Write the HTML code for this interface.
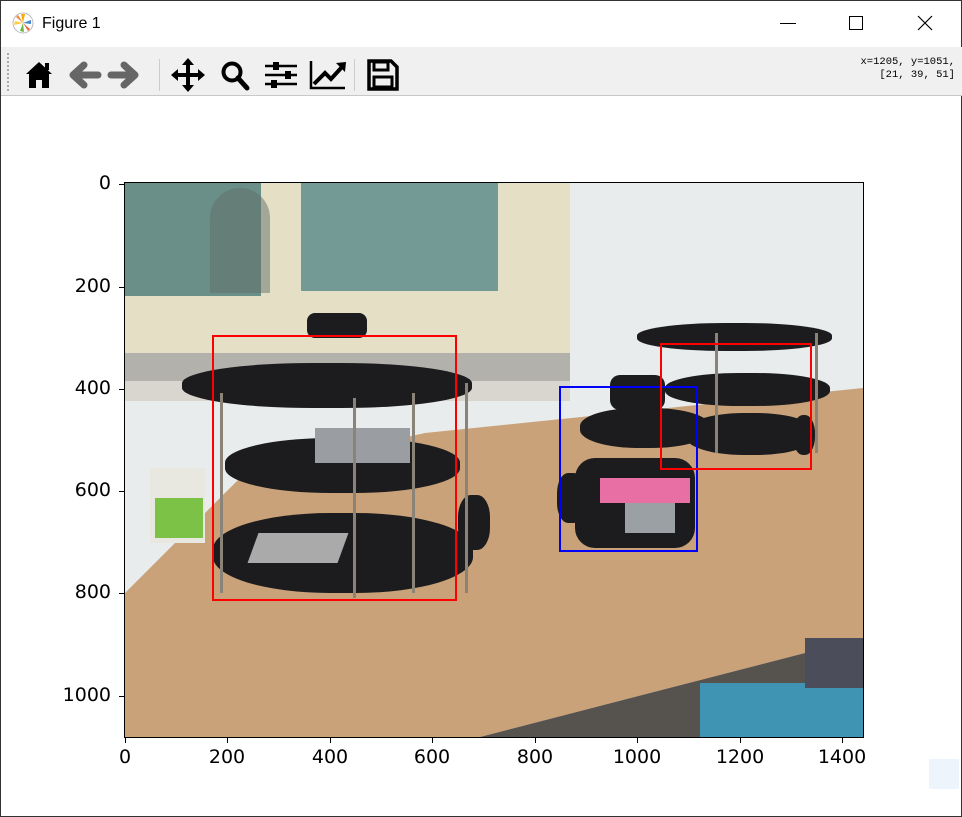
<!DOCTYPE html>
<html><head><meta charset="utf-8"><style>
*{margin:0;padding:0;box-sizing:border-box}
body{width:962px;height:817px;background:#fff;position:relative;overflow:hidden;font-family:"DejaVu Sans","Liberation Sans",sans-serif;border:1px solid #333}
.a{position:absolute}
.tb{left:0;top:46px;width:962px;height:49px;background:#f0f0f0;border-bottom:1px solid #c8c8c8}
.yl{position:absolute;right:850px;font-size:19px;color:#000;text-align:right}
.xl{position:absolute;top:745px;font-size:19px;color:#000;transform:translateX(-50%)}
.tk{position:absolute;background:#000}
.box{position:absolute;border:2px solid}
.plate{position:absolute;background:#1c1c1e;border-radius:45%}
.rod{position:absolute;width:3px;background:#8a8478}
</style></head><body>
<svg class="a" style="left:11px;top:11px" width="22" height="22" viewBox="0 0 22 22"><circle cx="11" cy="11" r="10" fill="#fff" stroke="#bbb"/><path d="M11 11L4 5L6 3Z" fill="#e84"/><path d="M11 11L9 2L13 2Z" fill="#fa0"/><path d="M11 11L2 13L3 9Z" fill="#fc4"/><path d="M11 11L18 17L16 19Z" fill="#e64"/><path d="M11 11L8 19L12 20Z" fill="#6b4"/><path d="M11 11L19 8L19 12Z" fill="#48c"/></svg>
<div class="a" style="left:41px;top:14px;font-family:'Liberation Sans',sans-serif;font-size:16px">Figure 1</div>
<div class="a" style="left:779px;top:22px;width:16px;height:1px;background:#000"></div>
<div class="a" style="left:848px;top:15px;width:14px;height:14px;border:1px solid #000"></div>
<svg class="a" style="left:916px;top:14px" width="16" height="16"><path d="M1 1L15 15M15 1L1 15" stroke="#000" stroke-width="1.2"/></svg>
<div class="a tb"></div>
<div class="a" style="left:6px;top:52px;width:2px;height:38px;border-left:2px dotted #aaa"></div>
<svg class="a" style="left:22px;top:56px" width="380" height="36" viewBox="0 0 380 36">
<path d="M3 17L16 5L29 17L26 17L26 31L19 31L19 23L13 23L13 31L6 31L6 17Z" fill="#000"/><rect x="22" y="6" width="4" height="7" fill="#000"/>
<path d="M61 8L50 18L61 28M50 18L75 18" stroke="#666" stroke-width="7" fill="none" stroke-linejoin="round" stroke-linecap="round"/>
<path d="M101 8L112 18L101 28M112 18L88 18" stroke="#666" stroke-width="7" fill="none" stroke-linejoin="round" stroke-linecap="round"/>
<rect x="136" y="2" width="1" height="32" fill="#ccc"/>
<path d="M165 4V32M151 18H179" stroke="#000" stroke-width="4"/><path d="M165 1L159 8H171ZM165 35L159 28H171ZM148 18L155 12V24ZM182 18L175 12V24Z" fill="#000"/>
<circle cx="209" cy="15" r="8.5" stroke="#000" stroke-width="4" fill="none"/><path d="M215 21L224 31" stroke="#000" stroke-width="5" stroke-linecap="round"/>
<path d="M242 9H274M242 18H274M242 27H274" stroke="#000" stroke-width="2.5"/><rect x="250" y="5" width="6" height="8" fill="#000"/><rect x="262" y="14" width="6" height="8" fill="#000"/><rect x="248" y="23" width="6" height="8" fill="#000"/>
<path d="M288 4V31H322" stroke="#000" stroke-width="2.5" fill="none"/><path d="M291 27L302 16L308 22L319 10" stroke="#000" stroke-width="4" fill="none"/><path d="M313 6L323 5L322 15Z" fill="#000"/>
<rect x="331" y="2" width="1" height="32" fill="#ccc"/>
<path d="M346 4H368L374 10V32H346Z" fill="none" stroke="#000" stroke-width="3.5"/><rect x="351" y="5" width="14" height="8" fill="none" stroke="#000" stroke-width="3"/><rect x="351" y="20" width="18" height="10" fill="none" stroke="#000" stroke-width="3"/>
</svg>
<div class="a" style="right:6px;top:55px;font-family:'Liberation Mono',monospace;font-size:10.5px;line-height:13px;text-align:right">x=1205, y=1051,<br>[21, 39, 51]</div>
<div class="a" style="left:124px;top:182px;width:738px;height:554px;overflow:hidden;background:#e9ecec">
 <div class="a" style="left:0;top:0;width:445px;height:190px;background:#e5dfc6"></div>
 <div class="a" style="left:0;top:0;width:136px;height:113px;background:#6a8e88"></div>
 <div class="a" style="left:176px;top:0;width:197px;height:108px;background:#749a95"></div>
 <div class="a" style="left:85px;top:5px;width:60px;height:105px;background:#5f6f68;border-radius:30px 30px 0 0;opacity:.5"></div>
 <div class="a" style="left:0;top:170px;width:445px;height:28px;background:#b3b1ac"></div>
 <div class="a" style="left:0;top:198px;width:445px;height:20px;background:#d9d6cf"></div>
 <div class="a" style="left:0;top:0;width:738px;height:554px;background:#c9a27a;clip-path:polygon(0 410px,120px 290px,300px 250px,738px 205px,738px 455px,355px 554px,0 554px)"></div>
 <div class="a" style="left:0;top:0;width:738px;height:554px;background:#56524e;clip-path:polygon(355px 554px,738px 455px,738px 554px)"></div>
 <div class="a" style="left:575px;top:500px;width:163px;height:54px;background:#3f93b3"></div>
 <div class="a" style="left:680px;top:455px;width:58px;height:50px;background:#4b4e5a"></div>
 <div class="a" style="left:25px;top:285px;width:55px;height:75px;background:#e8e8e0"></div>
 <div class="a" style="left:30px;top:315px;width:48px;height:40px;background:#7cc247"></div>
 <div class="plate" style="left:182px;top:130px;width:60px;height:25px;border-radius:8px"></div>
 <div class="plate" style="left:57px;top:180px;width:290px;height:45px"></div>
 <div class="plate" style="left:100px;top:255px;width:235px;height:55px"></div>
 <div class="a" style="left:190px;top:245px;width:95px;height:35px;background:#9a9ea2"></div>
 <div class="plate" style="left:88px;top:330px;width:260px;height:80px"></div>
 <div class="a" style="left:128px;top:350px;width:90px;height:30px;background:#aaa;transform:skewX(-20deg)"></div>
 <div class="plate" style="left:333px;top:312px;width:32px;height:55px;border-radius:40%"></div>
 <div class="rod" style="left:95px;top:210px;height:200px"></div>
 <div class="rod" style="left:228px;top:215px;height:200px"></div>
 <div class="rod" style="left:287px;top:210px;height:200px"></div>
 <div class="rod" style="left:340px;top:200px;height:210px"></div>
 <div class="plate" style="left:512px;top:140px;width:195px;height:28px"></div>
 <div class="plate" style="left:540px;top:190px;width:165px;height:33px"></div>
 <div class="plate" style="left:560px;top:230px;width:130px;height:42px"></div>
 <div class="plate" style="left:668px;top:232px;width:22px;height:40px"></div>
 <div class="rod" style="left:590px;top:150px;height:120px"></div>
 <div class="rod" style="left:690px;top:150px;height:120px"></div>
 <div class="plate" style="left:485px;top:192px;width:55px;height:35px;border-radius:10px"></div>
 <div class="plate" style="left:455px;top:225px;width:130px;height:40px"></div>
 <div class="plate" style="left:450px;top:275px;width:120px;height:90px;border-radius:20px"></div>
 <div class="a" style="left:475px;top:295px;width:90px;height:25px;background:#e86fa4"></div>
 <div class="plate" style="left:432px;top:290px;width:28px;height:50px;border-radius:40%"></div>
 <div class="a" style="left:500px;top:320px;width:50px;height:30px;background:#9aa0a4"></div>
</div>
<div class="box" style="left:211px;top:334px;width:245px;height:266px;border-color:#f00"></div>
<div class="box" style="left:558px;top:385px;width:139px;height:166px;border-color:#00f"></div>
<div class="box" style="left:659px;top:342px;width:152px;height:127px;border-color:#f00"></div>
<div class="a" style="left:123px;top:181px;width:740px;height:556px;border:1px solid #000"></div>
<div class="tk" style="left:118px;top:183px;width:5px;height:1px"></div>
<div class="tk" style="left:118px;top:286px;width:5px;height:1px"></div>
<div class="tk" style="left:118px;top:388px;width:5px;height:1px"></div>
<div class="tk" style="left:118px;top:490px;width:5px;height:1px"></div>
<div class="tk" style="left:118px;top:592px;width:5px;height:1px"></div>
<div class="tk" style="left:118px;top:695px;width:5px;height:1px"></div>
<div class="yl" style="top:171px">0</div>
<div class="yl" style="top:274px">200</div>
<div class="yl" style="top:376px">400</div>
<div class="yl" style="top:478px">600</div>
<div class="yl" style="top:580px">800</div>
<div class="yl" style="top:683px">1000</div>
<div class="tk" style="left:124px;top:737px;width:1px;height:5px"></div>
<div class="tk" style="left:226px;top:737px;width:1px;height:5px"></div>
<div class="tk" style="left:329px;top:737px;width:1px;height:5px"></div>
<div class="tk" style="left:431px;top:737px;width:1px;height:5px"></div>
<div class="tk" style="left:534px;top:737px;width:1px;height:5px"></div>
<div class="tk" style="left:636px;top:737px;width:1px;height:5px"></div>
<div class="tk" style="left:739px;top:737px;width:1px;height:5px"></div>
<div class="tk" style="left:841px;top:737px;width:1px;height:5px"></div>
<div class="xl" style="left:124px">0</div>
<div class="xl" style="left:226px">200</div>
<div class="xl" style="left:329px">400</div>
<div class="xl" style="left:431px">600</div>
<div class="xl" style="left:534px">800</div>
<div class="xl" style="left:636px">1000</div>
<div class="xl" style="left:739px">1200</div>
<div class="xl" style="left:841px">1400</div>
<div class="a" style="left:928px;top:758px;width:30px;height:30px;background:#eef4fb"></div>
</body></html>
